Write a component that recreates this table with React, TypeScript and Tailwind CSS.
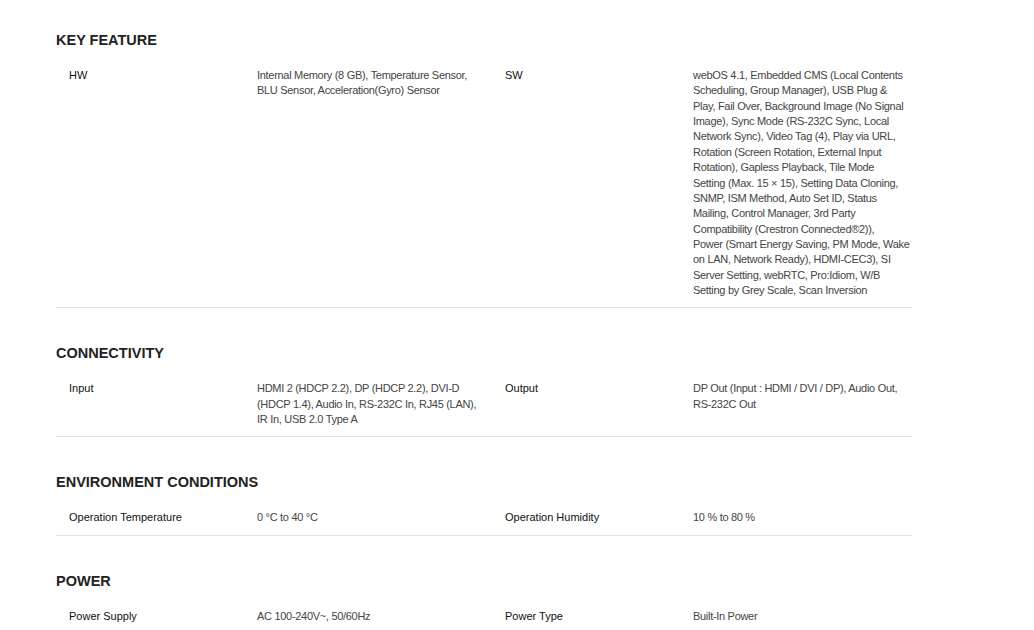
// values are kept as the lines they wrap to on the page
const sections = [
  {
    title: "KEY FEATURE",
    rows: [
      {
        k1: "HW",
        v1: ["Internal Memory (8 GB), Temperature Sensor,", "BLU Sensor, Acceleration(Gyro) Sensor"],
        k2: "SW",
        v2: [
          "webOS 4.1, Embedded CMS (Local Contents",
          "Scheduling, Group Manager), USB Plug &",
          "Play, Fail Over, Background Image (No Signal",
          "Image), Sync Mode (RS-232C Sync, Local",
          "Network Sync), Video Tag (4), Play via URL,",
          "Rotation (Screen Rotation, External Input",
          "Rotation), Gapless Playback, Tile Mode",
          "Setting (Max. 15 × 15), Setting Data Cloning,",
          "SNMP, ISM Method, Auto Set ID, Status",
          "Mailing, Control Manager, 3rd Party",
          "Compatibility (Crestron Connected®2)),",
          "Power (Smart Energy Saving, PM Mode, Wake",
          "on LAN, Network Ready), HDMI-CEC3), SI",
          "Server Setting, webRTC, Pro:Idiom, W/B",
          "Setting by Grey Scale, Scan Inversion",
        ],
      },
    ],
  },
  {
    title: "CONNECTIVITY",
    rows: [
      {
        k1: "Input",
        v1: [
          "HDMI 2 (HDCP 2.2), DP (HDCP 2.2), DVI-D",
          "(HDCP 1.4), Audio In, RS-232C In, RJ45 (LAN),",
          "IR In, USB 2.0 Type A",
        ],
        k2: "Output",
        v2: ["DP Out (Input : HDMI / DVI / DP), Audio Out,", "RS-232C Out"],
      },
    ],
  },
  {
    title: "ENVIRONMENT CONDITIONS",
    rows: [
      {
        k1: "Operation Temperature",
        v1: ["0 °C to 40 °C"],
        k2: "Operation Humidity",
        v2: ["10 % to 80 %"],
      },
    ],
  },
  {
    title: "POWER",
    rows: [
      {
        k1: "Power Supply",
        v1: ["AC 100-240V~, 50/60Hz"],
        k2: "Power Type",
        v2: ["Built-In Power"],
      },
    ],
  },
];

function Lines({ lines }: { lines: string[] }) {
  return (
    <>
      {lines.map((l, i) => (
        <div key={i} className="whitespace-nowrap">
          {l}
        </div>
      ))}
    </>
  );
}

export default function App() {
  return (
    <div
      className="h-screen overflow-hidden bg-white pt-[30px] pl-[56px]"
      style={{ fontFamily: '"Liberation Sans", Arial, sans-serif' }}
    >
      <div className="w-[856px]">
        {sections.map((s) => (
          <div key={s.title} className="mb-[35px]">
            <h2 className="text-[14.5px] leading-[20px] font-bold text-[#222]">
              {s.title}
            </h2>
            {s.rows.map((r) => (
              <div
                key={r.k1}
                className="grid grid-cols-[201px_248px_188px_219px] pt-[18px] pb-[9px] border-b border-[#e4e4e4] text-[11px] leading-[15.36px]"
              >
                <div className="pl-[13px] pr-4 text-[#111]">{r.k1}</div>
                <div className="tracking-[-0.3px] text-[#444]">
                  <Lines lines={r.v1} />
                </div>
                <div className="pr-4 text-[#111]">{r.k2}</div>
                <div className="tracking-[-0.3px] text-[#444]">
                  <Lines lines={r.v2} />
                </div>
              </div>
            ))}
          </div>
        ))}
      </div>
    </div>
  );
}
